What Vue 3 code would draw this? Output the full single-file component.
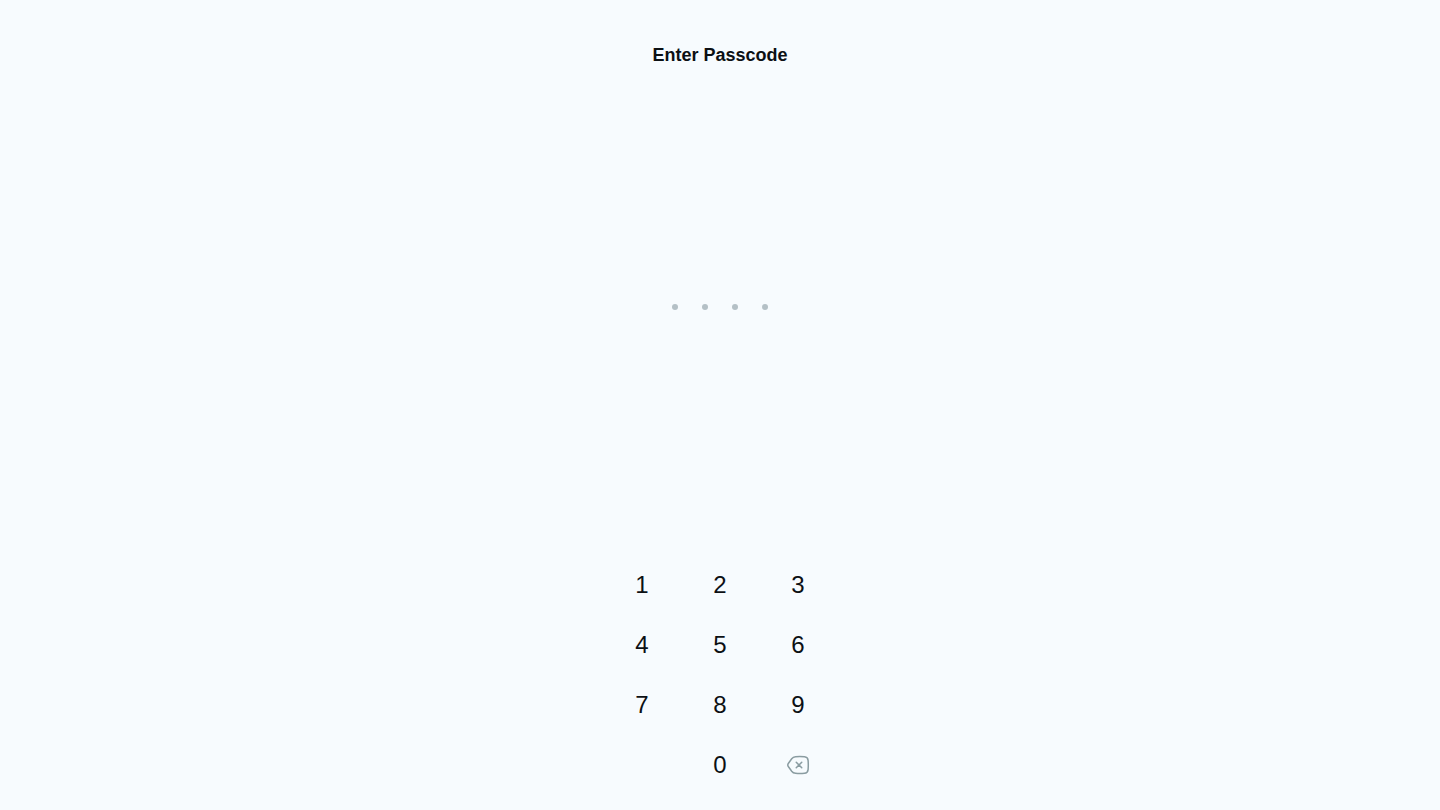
<script setup>
import { ref } from 'vue'

const length = 4
const code = ref('')

function press(digit) {
  if (code.value.length < length) code.value += digit
}

function erase() {
  code.value = code.value.slice(0, -1)
}
</script>

<template>
  <main class="screen">
    <h1 class="title">Enter Passcode</h1>
    <div class="entry" role="status" :aria-label="`${code.length} of ${length} digits entered`">
      <span v-for="n in length" :key="n" class="dot" :class="{ filled: n <= code.length }"></span>
    </div>
    <div class="keypad">
      <button v-for="n in 9" :key="n" class="key" type="button" @click="press(String(n))">{{ n }}</button>
      <button class="key zero" type="button" @click="press('0')">0</button>
      <button class="key" type="button" aria-label="Delete" @click="erase">
        <svg class="icon" viewBox="0 0 24 24" width="24" height="24" aria-hidden="true">
          <path d="M9.500 3.750C12.500 3.500 15.500 3.500 18.500 3.800C20.800 4 21.900 5.200 22.100 7.400C22.350 10.500 22.350 13.500 22.100 16.600C21.900 18.800 20.800 20 18.500 20.200C15.500 20.500 12.500 20.500 9.500 20.250C7.800 20.100 6.700 19.500 5.700 18.200L2.300 13.500C1.600 12.500 1.600 11.500 2.300 10.500L5.700 5.800C6.700 4.500 7.800 3.900 9.500 3.750Z" />
          <path d="m10.250 9.250 5.500 5.500m0-5.500-5.500 5.500" />
        </svg>
      </button>
    </div>
  </main>
</template>

<style>
body {
  background: #f7fbfe;
}
</style>

<style scoped>
.screen {
  box-sizing: border-box;
  min-height: 100vh;
  padding: 44px 16px 15px;
  display: flex;
  flex-direction: column;
  align-items: center;
  background: #f7fbfe;
  color: #0c1014;
  font-family: "Liberation Sans", Arial, sans-serif;
}

.title {
  margin: 0;
  font-size: 18px;
  line-height: 22px;
  font-weight: 700;
}

.entry {
  flex: 1;
  display: flex;
  align-items: center;
  gap: 24px;
  padding-bottom: 7px;
}

.dot {
  width: 6px;
  height: 6px;
  border-radius: 50%;
  background: #b4c0c6;
}

.dot.filled {
  background: #0c1014;
}

.keypad {
  display: grid;
  grid-template-columns: repeat(3, 78px);
  grid-auto-rows: 60px;
}

.key {
  display: flex;
  align-items: center;
  justify-content: center;
  padding: 0;
  border: 0;
  background: none;
  color: inherit;
  font-family: inherit;
  font-size: 24px;
  line-height: 28px;
  cursor: pointer;
}

.zero {
  grid-column: 2;
}

.icon {
  fill: none;
  stroke: #8a9ca1;
  stroke-width: 1.5;
  stroke-linecap: round;
  stroke-linejoin: round;
}
</style>
